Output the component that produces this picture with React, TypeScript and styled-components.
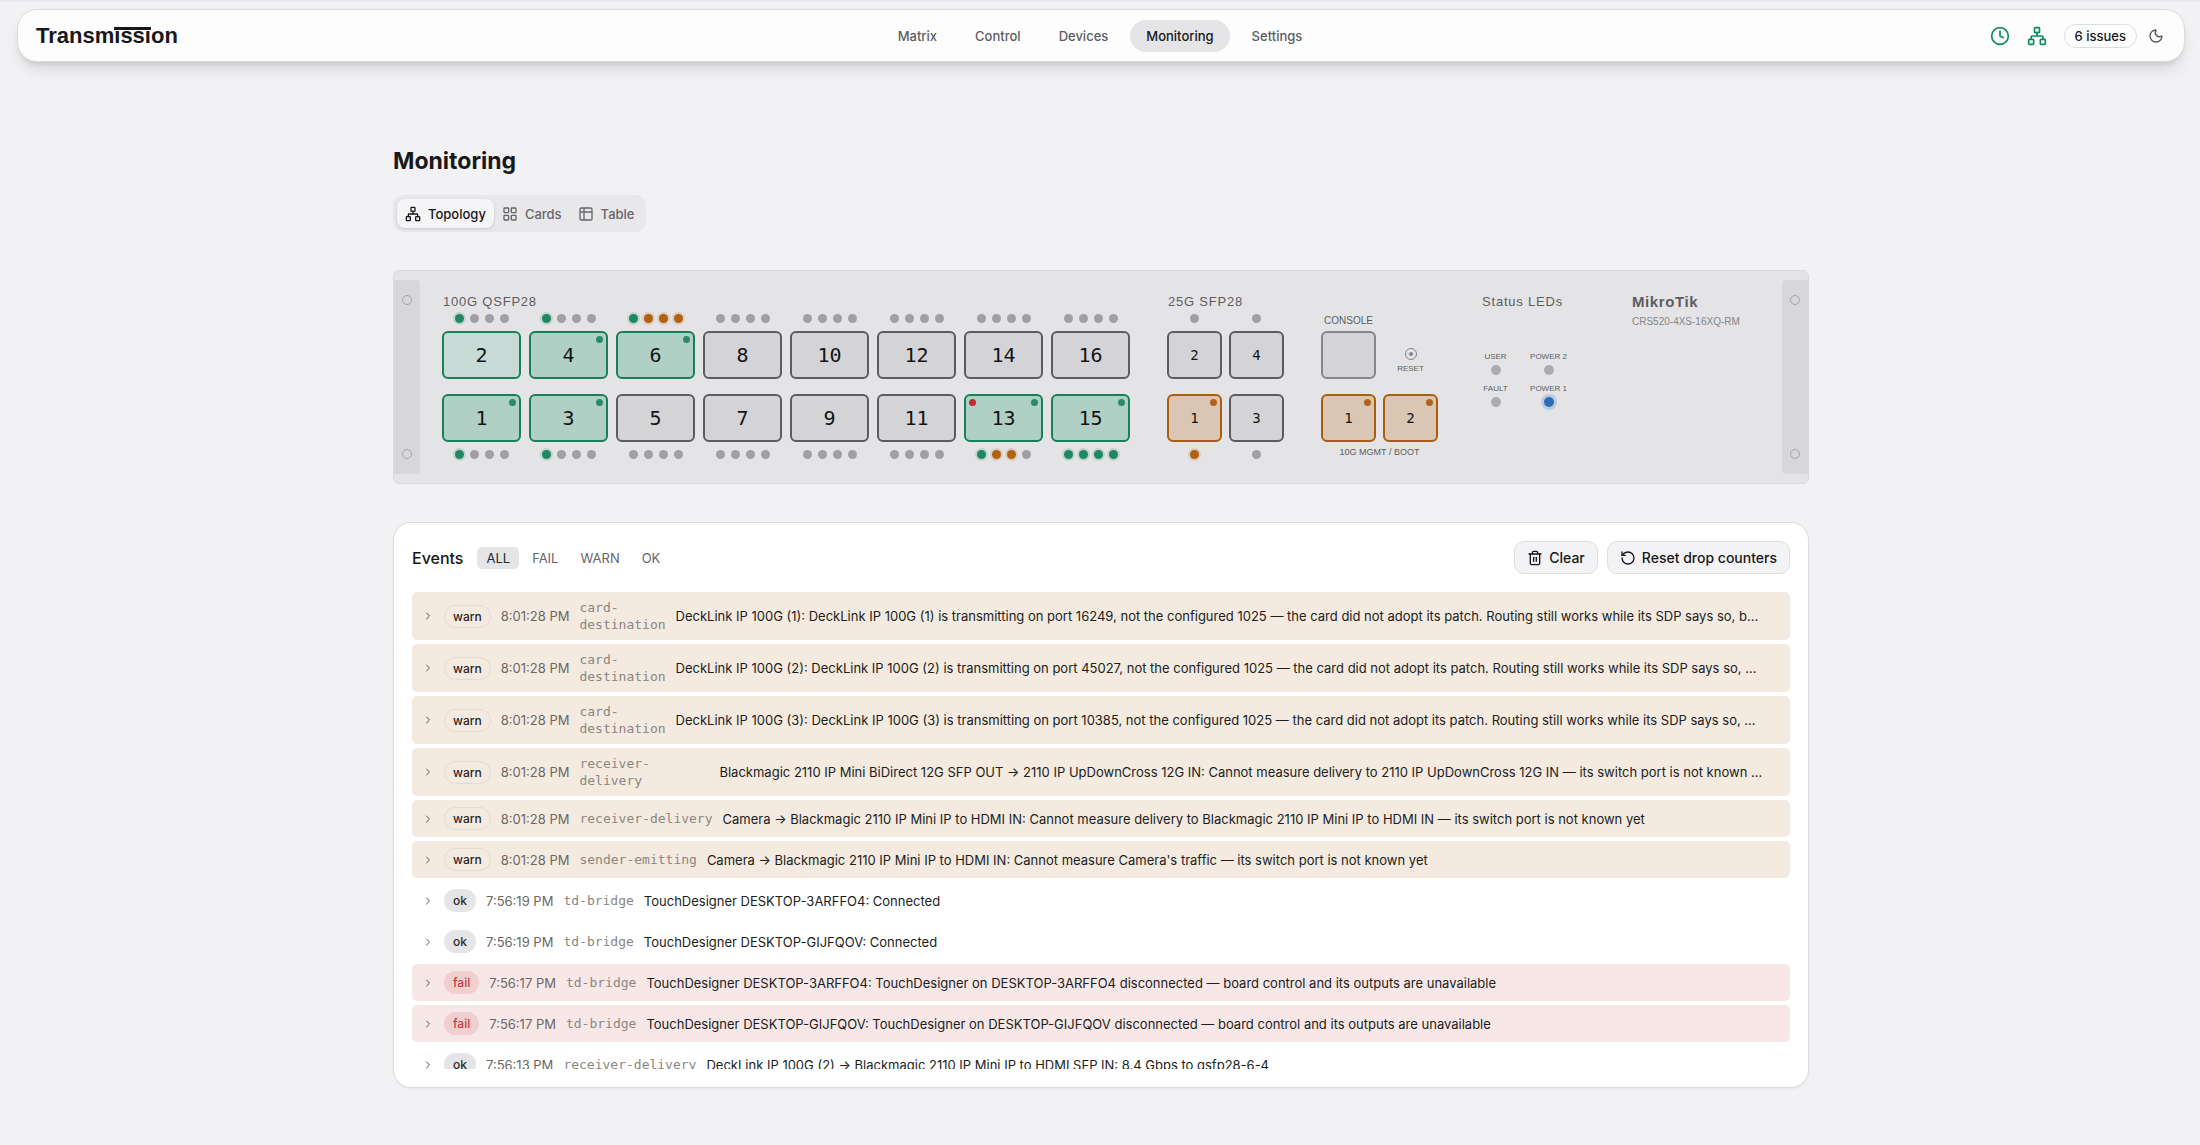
import React, { useState } from "react";
import styled, { createGlobalStyle, css } from "styled-components";
import {
  ChevronRight,
  Clock,
  LayoutGrid,
  Moon,
  Network,
  RotateCcw,
  Table2,
  Trash2,
} from "lucide-react";

const sans = `Inter, "Liberation Sans", sans-serif`;
const label = `"Liberation Sans", Arial, sans-serif`;
const mono = `"DejaVu Sans Mono", "Liberation Mono", monospace`;

const GlobalStyle = createGlobalStyle`
  * { box-sizing: border-box; }
  body {
    margin: 0;
    background: #f2f2f4;
    color: #18181a;
    font-family: ${sans};
    font-size: 13px;
    line-height: 20px;
    -webkit-font-smoothing: antialiased;
  }
  h1, h2, p, ul { margin: 0; padding: 0; }
  button { font: inherit; color: inherit; border: 0; background: none; padding: 0; cursor: pointer; }
  a { color: inherit; text-decoration: none; }
`;

const Page = styled.div`
  display: flex;
  flex-direction: column;
  border-top: 2px solid #e9e9eb;
  padding: 7px 15px 56px 17px;
`;

/* ---------- header ---------- */

const Header = styled.header`
  display: grid;
  grid-template-columns: 1fr auto 1fr;
  align-items: center;
  height: 53px;
  padding: 0 20px 0 18px;
  background: #fdfdfd;
  border: 1px solid #dcdcde;
  border-radius: 20px;
  box-shadow: 0 10px 16px -3px rgba(0, 0, 0, 0.11), 0 4px 6px -3px rgba(0, 0, 0, 0.12);
`;

const Logo = styled.a`
  justify-self: start;
  font-family: ${label};
  font-size: 22px;
  line-height: 28px;
  font-weight: 700;
`;

const Barred = styled.span`
  position: relative;
  &::before {
    content: "";
    position: absolute;
    left: 0;
    right: 0;
    top: 4px;
    height: 3px;
    background: currentColor;
  }
`;

const Nav = styled.nav`
  display: flex;
  gap: 6px;
`;

const NavLink = styled.a<{ $active?: boolean }>`
  padding: 6px 16px;
  border-radius: 16px;
  font-weight: 500;
  color: ${(p) => (p.$active ? "#18181a" : "#5e5e62")};
  background: ${(p) => (p.$active ? "#e5e5e7" : "transparent")};
`;

const HeaderTools = styled.div`
  justify-self: end;
  display: flex;
  align-items: center;
`;

const StatusIcon = styled.span`
  display: flex;
  margin-right: 17px;
  color: #0f8a60;
`;

const IssueBadge = styled.button`
  height: 24px;
  padding: 0 10px;
  border: 1px solid #dedee0;
  border-radius: 12px;
  font-weight: 500;
  line-height: 22px;
`;

const ThemeButton = styled.button`
  display: flex;
  margin-left: 11px;
  color: #55555a;
`;

/* ---------- page ---------- */

const Main = styled.main`
  display: flex;
  flex-direction: column;
  width: 100%;
  max-width: 1416px;
  margin: 83px auto 0;
`;

const Title = styled.h1`
  font-size: 23px;
  line-height: 32px;
  font-weight: 700;
`;

const Tabs = styled.div`
  display: flex;
  align-self: flex-start;
  margin-top: 18px;
  padding: 4px;
  border-radius: 11px;
  background: #e8e8ea;
`;

const Tab = styled.button<{ $active?: boolean }>`
  display: flex;
  align-items: center;
  gap: 7px;
  height: 29px;
  padding: 0 8px;
  border-radius: 8px;
  font-weight: 500;
  color: #66666a;
  ${(p) =>
    p.$active &&
    css`
      color: #18181a;
      background: #f5f5f7;
      box-shadow: 0 1px 3px rgba(0, 0, 0, 0.14);
    `}
`;

/* ---------- switch faceplate ---------- */

const Faceplate = styled.section`
  display: flex;
  margin-top: 38px;
  border: 1px solid #dadadc;
  border-radius: 6px;
  background: #e4e4e6;
  color: #5c5c60;
  font-family: ${label};
`;

const Ear = styled.div<{ $side: "left" | "right" }>`
  display: flex;
  flex-direction: column;
  justify-content: space-between;
  align-items: center;
  flex: none;
  width: 26px;
  margin: 9px 0;
  padding: 15px 0;
  background: #d7d7d9;
  border-radius: ${(p) => (p.$side === "left" ? "0 4px 4px 0" : "4px 0 0 4px")};
`;

const Screw = styled.span`
  width: 10px;
  height: 10px;
  border: 1px solid #a4a4a6;
  border-radius: 50%;
`;

const Plate = styled.div`
  display: flex;
  flex: 1;
  gap: 37px;
  padding: 23px 22px 24px;
`;

const Group = styled.div`
  display: flex;
  flex-direction: column;
`;

const GroupLabel = styled.div`
  height: 16px;
  margin-bottom: 4px;
  padding-left: 1px;
  font-size: 13px;
  line-height: 16px;
  letter-spacing: 0.06em;
`;

const PortGrid = styled.div<{ $gap: number }>`
  display: grid;
  grid-auto-flow: column;
  grid-template-rows: auto auto;
  gap: 15px ${(p) => p.$gap}px;
`;

const PortCell = styled.div`
  display: flex;
  flex-direction: column;
  align-items: center;
  gap: 8px;
`;

const LedRow = styled.div`
  display: flex;
  gap: 6px;
  height: 9px;
`;

type Tone = "off" | "green" | "amber";

const ledColor: Record<Tone, string> = { off: "#a0a0a2", green: "#1f8862", amber: "#b06212" };

const Led = styled.span<{ $tone: Tone }>`
  width: 9px;
  height: 9px;
  border-radius: 50%;
  background: ${(p) => ledColor[p.$tone]};
  box-shadow: ${(p) => (p.$tone === "off" ? "none" : `0 0 0 2px ${ledColor[p.$tone]}2e`)};
`;

type PortState = "down" | "linked" | "up" | "amber" | "blank";

const portLook: Record<PortState, [string, string]> = {
  down: ["#5c5c60", "#d4d4d6"],
  linked: ["#15805a", "#c8dad6"],
  up: ["#15805a", "#b0d0c5"],
  amber: ["#a85e0c", "#d9c7b3"],
  blank: ["#868689", "#d4d4d6"],
};

const PortBox = styled.button<{ $state: PortState; $small?: boolean }>`
  position: relative;
  width: ${(p) => (p.$small ? 55 : 79)}px;
  height: 48px;
  border: 2px solid ${(p) => portLook[p.$state][0]};
  border-radius: 6px;
  background: ${(p) => portLook[p.$state][1]};
  color: #141416;
  font-family: ${mono};
  font-size: ${(p) => (p.$small ? 14 : 20)}px;
  line-height: 44px;
`;

const PortDot = styled.span<{ $color: string; $left?: boolean }>`
  position: absolute;
  top: 3px;
  ${(p) => (p.$left ? "left" : "right")}: 3px;
  width: 7px;
  height: 7px;
  border-radius: 50%;
  background: ${(p) => p.$color};
`;

const MgmtGroup = styled(Group)`
  padding-top: 21px;
`;

const MgmtGrid = styled.div`
  display: grid;
  grid-template-columns: 55px 55px;
  column-gap: 7px;
`;

const ConsoleLabel = styled.div`
  grid-area: 1 / 1;
  margin-bottom: 4px;
  font-size: 10px;
  line-height: 12px;
  text-align: center;
`;

const ConsolePort = styled(PortBox)`
  grid-area: 2 / 1;
`;

const ResetCell = styled.div`
  grid-area: 2 / 2;
  display: flex;
  flex-direction: column;
  align-items: center;
  justify-content: center;
  gap: 4px;
  padding-top: 12px;
`;

const ResetHole = styled.button`
  display: flex;
  align-items: center;
  justify-content: center;
  width: 12px;
  height: 12px;
  border: 1px solid #86868a;
  border-radius: 50%;
  &::before {
    content: "";
    width: 4px;
    height: 4px;
    border-radius: 50%;
    background: #86868a;
  }
`;

const Tiny = styled.span`
  font-size: 8px;
  line-height: 10px;
  white-space: nowrap;
`;

const MgmtRow = styled.div`
  display: flex;
  gap: 7px;
  margin: 15px 0 4px;
`;

const MgmtCaption = styled.div`
  font-size: 9px;
  line-height: 12px;
  text-align: center;
`;

const StatusGroup = styled(Group)`
  align-items: center;
  gap: 38px;
`;

const StatusGrid = styled.div`
  display: grid;
  grid-template-columns: 41px 41px;
  gap: 9px 12px;
`;

const Indicator = styled.div`
  display: flex;
  flex-direction: column;
  align-items: center;
  gap: 3px;
`;

const IndicatorDot = styled.span<{ $on?: boolean }>`
  width: 10px;
  height: 10px;
  border-radius: 50%;
  background: ${(p) => (p.$on ? "#2b6cb3" : "#acacae")};
  box-shadow: ${(p) => (p.$on ? "0 0 0 3px #b9cbe0" : "none")};
`;

const Brand = styled(Group)`
  gap: 6px;
  padding-left: 26px;
`;

const BrandName = styled.div`
  font-size: 15px;
  line-height: 16px;
  font-weight: 700;
  letter-spacing: 0.04em;
`;

const BrandModel = styled.div`
  color: #858589;
  font-size: 10px;
  line-height: 12px;
  white-space: nowrap;
`;

/* ---------- events ---------- */

const Card = styled.section`
  margin-top: 38px;
  padding: 18px;
  border: 1px solid #dcdcdf;
  border-radius: 18px;
  background: #ffffff;
  box-shadow: 0 1px 2px rgba(0, 0, 0, 0.05);
`;

const CardHead = styled.div`
  display: flex;
  align-items: center;
  margin-bottom: 18px;
`;

const CardTitle = styled.h2`
  font-size: 16px;
  line-height: 22px;
  font-weight: 500;
`;

const Filters = styled.div`
  display: flex;
  gap: 4px;
  margin-left: 14px;
`;

const Filter = styled.button<{ $active?: boolean }>`
  padding: 1px 9px;
  border-radius: 5px;
  color: ${(p) => (p.$active ? "#29292c" : "#66666a")};
  background: ${(p) => (p.$active ? "#e5e5e7" : "transparent")};
`;

const Actions = styled.div`
  display: flex;
  gap: 9px;
  margin-left: auto;
`;

const ActionButton = styled.button`
  display: flex;
  align-items: center;
  gap: 6px;
  height: 33px;
  padding: 0 12px;
  border: 1px solid #dedee1;
  border-radius: 10px;
  background: #f3f3f5;
  font-size: 14px;
  font-weight: 500;
`;

const EventList = styled.ul`
  display: flex;
  flex-direction: column;
  gap: 4px;
  max-height: 477px;
  overflow: hidden;
  list-style: none;
`;

type Level = "warn" | "ok" | "fail";

const rowColor: Record<Level, string> = { warn: "#f4eae0", ok: "transparent", fail: "#f8e7e7" };

const EventRow = styled.li<{ $level: Level }>`
  display: flex;
  align-items: center;
  flex: none;
  gap: 10px;
  padding: 7px 10px;
  border-radius: 5px;
  background: ${(p) => rowColor[p.$level]};
`;

const Expand = styled.button`
  display: flex;
  flex: none;
  width: 12px;
  justify-content: center;
  color: #55555a;
`;

const badgeLook = {
  warn: css`
    border-color: #e3dbd6;
    color: #29241f;
  `,
  ok: css`
    background: #e5e5e7;
    color: #29292c;
  `,
  fail: css`
    background: #f2cfcf;
    color: #c53a42;
  `,
};

const LevelBadge = styled.span<{ $level: Level }>`
  flex: none;
  height: 23px;
  padding: 0 8px;
  border: 1px solid transparent;
  border-radius: 12px;
  font-size: 12px;
  line-height: 21px;
  font-weight: 500;
  ${(p) => badgeLook[p.$level]}
`;

const Time = styled.time`
  flex: none;
  color: #6b6866;
`;

const Source = styled.span<{ $width?: string }>`
  flex: none;
  width: ${(p) => p.$width ?? "auto"};
  color: #8b8681;
  font-family: ${mono};
  line-height: 17px;
`;

const Message = styled.span`
  flex: 0 1 auto;
  min-width: 0;
  overflow: hidden;
  white-space: nowrap;
  text-overflow: ellipsis;
  color: #201d1c;
`;

/* ---------- data ---------- */

interface PortData {
  id: number;
  state: PortState;
  leds: Tone[];
  fault?: boolean;
}

const off: Tone[] = ["off", "off", "off", "off"];
const one: Tone[] = ["green", "off", "off", "off"];

const qsfp: PortData[] = [
  { id: 2, state: "linked", leds: one },
  { id: 1, state: "up", leds: one },
  { id: 4, state: "up", leds: one },
  { id: 3, state: "up", leds: one },
  { id: 6, state: "up", leds: ["green", "amber", "amber", "amber"] },
  { id: 5, state: "down", leds: off },
  { id: 8, state: "down", leds: off },
  { id: 7, state: "down", leds: off },
  { id: 10, state: "down", leds: off },
  { id: 9, state: "down", leds: off },
  { id: 12, state: "down", leds: off },
  { id: 11, state: "down", leds: off },
  { id: 14, state: "down", leds: off },
  { id: 13, state: "up", leds: ["green", "amber", "amber", "off"], fault: true },
  { id: 16, state: "down", leds: off },
  { id: 15, state: "up", leds: ["green", "green", "green", "green"] },
];

const sfp: PortData[] = [
  { id: 2, state: "down", leds: ["off"] },
  { id: 1, state: "amber", leds: ["amber"] },
  { id: 4, state: "down", leds: ["off"] },
  { id: 3, state: "down", leds: ["off"] },
];

interface EventData {
  level: Level;
  time: string;
  source: string;
  text: string;
  sourceWidth?: string;
}

const adoptEvent = (card: number, port: number, tail: string): EventData => ({
  level: "warn",
  time: "8:01:28 PM",
  source: "card-destination",
  sourceWidth: "min-content",
  text: `DeckLink IP 100G (${card}): DeckLink IP 100G (${card}) is transmitting on port ${port}, not the configured 1025 — the card did not adopt its patch. Routing still works while its SDP says so, ${tail}…`,
});

const events: EventData[] = [
  adoptEvent(1, 16249, "b"),
  adoptEvent(2, 45027, ""),
  adoptEvent(3, 10385, ""),
  {
    level: "warn",
    time: "8:01:28 PM",
    source: "receiver-delivery",
    sourceWidth: "130px",
    text: "Blackmagic 2110 IP Mini BiDirect 12G SFP OUT → 2110 IP UpDownCross 12G IN: Cannot measure delivery to 2110 IP UpDownCross 12G IN — its switch port is not known …",
  },
  {
    level: "warn",
    time: "8:01:28 PM",
    source: "receiver-delivery",
    text: "Camera → Blackmagic 2110 IP Mini IP to HDMI IN: Cannot measure delivery to Blackmagic 2110 IP Mini IP to HDMI IN — its switch port is not known yet",
  },
  {
    level: "warn",
    time: "8:01:28 PM",
    source: "sender-emitting",
    text: "Camera → Blackmagic 2110 IP Mini IP to HDMI IN: Cannot measure Camera's traffic — its switch port is not known yet",
  },
  { level: "ok", time: "7:56:19 PM", source: "td-bridge", text: "TouchDesigner DESKTOP-3ARFFO4: Connected" },
  { level: "ok", time: "7:56:19 PM", source: "td-bridge", text: "TouchDesigner DESKTOP-GIJFQOV: Connected" },
  {
    level: "fail",
    time: "7:56:17 PM",
    source: "td-bridge",
    text: "TouchDesigner DESKTOP-3ARFFO4: TouchDesigner on DESKTOP-3ARFFO4 disconnected — board control and its outputs are unavailable",
  },
  {
    level: "fail",
    time: "7:56:17 PM",
    source: "td-bridge",
    text: "TouchDesigner DESKTOP-GIJFQOV: TouchDesigner on DESKTOP-GIJFQOV disconnected — board control and its outputs are unavailable",
  },
  {
    level: "ok",
    time: "7:56:13 PM",
    source: "receiver-delivery",
    text: "DeckLink IP 100G (2) → Blackmagic 2110 IP Mini IP to HDMI SFP IN: 8.4 Gbps to qsfp28-6-4",
  },
];

/* ---------- components ---------- */

function Port({ port, small }: { port: PortData; small?: boolean }) {
  const leds = (
    <LedRow>
      {port.leds.map((tone, i) => (
        <Led key={i} $tone={tone} />
      ))}
    </LedRow>
  );
  const top = port.id % 2 === 0;
  return (
    <PortCell>
      {top && leds}
      <PortBox type="button" $state={port.state} $small={small}>
        {port.id}
        {port.fault && <PortDot $color="#c42a30" $left />}
        {port.state === "up" && <PortDot $color="#2a8a68" />}
        {port.state === "amber" && <PortDot $color="#ad6420" />}
      </PortBox>
      {!top && leds}
    </PortCell>
  );
}

function SwitchFaceplate() {
  return (
    <Faceplate>
      <Ear $side="left">
        <Screw />
        <Screw />
      </Ear>
      <Plate>
        <Group>
          <GroupLabel>100G QSFP28</GroupLabel>
          <PortGrid $gap={8}>
            {qsfp.map((p) => (
              <Port key={p.id} port={p} />
            ))}
          </PortGrid>
        </Group>
        <Group>
          <GroupLabel>25G SFP28</GroupLabel>
          <PortGrid $gap={7}>
            {sfp.map((p) => (
              <Port key={p.id} port={p} small />
            ))}
          </PortGrid>
        </Group>
        <MgmtGroup>
          <MgmtGrid>
            <ConsoleLabel>CONSOLE</ConsoleLabel>
            <ConsolePort type="button" aria-label="Console" $state="blank" $small />
            <ResetCell>
              <ResetHole type="button" aria-label="Reset" />
              <Tiny>RESET</Tiny>
            </ResetCell>
          </MgmtGrid>
          <MgmtRow>
            {[1, 2].map((n) => (
              <PortBox key={n} type="button" $state="amber" $small>
                {n}
                <PortDot $color="#ad6420" />
              </PortBox>
            ))}
          </MgmtRow>
          <MgmtCaption>10G MGMT / BOOT</MgmtCaption>
        </MgmtGroup>
        <StatusGroup>
          <GroupLabel>Status LEDs</GroupLabel>
          <StatusGrid>
            {["USER", "POWER 2", "FAULT", "POWER 1"].map((name) => (
              <Indicator key={name}>
                <Tiny>{name}</Tiny>
                <IndicatorDot $on={name === "POWER 1"} />
              </Indicator>
            ))}
          </StatusGrid>
        </StatusGroup>
        <Brand>
          <BrandName>MikroTik</BrandName>
          <BrandModel>CRS520-4XS-16XQ-RM</BrandModel>
        </Brand>
      </Plate>
      <Ear $side="right">
        <Screw />
        <Screw />
      </Ear>
    </Faceplate>
  );
}

function EventsCard() {
  const [filter, setFilter] = useState("ALL");
  const shown = events.filter((e) => filter === "ALL" || e.level.toUpperCase() === filter);
  return (
    <Card>
      <CardHead>
        <CardTitle>Events</CardTitle>
        <Filters>
          {["ALL", "FAIL", "WARN", "OK"].map((name) => (
            <Filter key={name} type="button" $active={name === filter} onClick={() => setFilter(name)}>
              {name}
            </Filter>
          ))}
        </Filters>
        <Actions>
          <ActionButton type="button">
            <Trash2 size={16} />
            Clear
          </ActionButton>
          <ActionButton type="button">
            <RotateCcw size={16} />
            Reset drop counters
          </ActionButton>
        </Actions>
      </CardHead>
      <EventList>
        {shown.map((e, i) => (
          <EventRow key={i} $level={e.level}>
            <Expand type="button" aria-label="Expand">
              <ChevronRight size={16} />
            </Expand>
            <LevelBadge $level={e.level}>{e.level}</LevelBadge>
            <Time>{e.time}</Time>
            <Source $width={e.sourceWidth}>{e.source}</Source>
            <Message>{e.text}</Message>
          </EventRow>
        ))}
      </EventList>
    </Card>
  );
}

export default function App() {
  const [view, setView] = useState("Topology");
  const views = [
    { name: "Topology", Icon: Network },
    { name: "Cards", Icon: LayoutGrid },
    { name: "Table", Icon: Table2 },
  ];
  return (
    <>
      <GlobalStyle />
      <Page>
        <Header>
          <Logo href="#">
            Transm<Barred>issi</Barred>on
          </Logo>
          <Nav>
            {["Matrix", "Control", "Devices", "Monitoring", "Settings"].map((name) => (
              <NavLink key={name} href="#" $active={name === "Monitoring"}>
                {name}
              </NavLink>
            ))}
          </Nav>
          <HeaderTools>
            <StatusIcon>
              <Clock size={20} />
            </StatusIcon>
            <StatusIcon>
              <Network size={20} />
            </StatusIcon>
            <IssueBadge type="button">6 issues</IssueBadge>
            <ThemeButton type="button" aria-label="Theme">
              <Moon size={16} />
            </ThemeButton>
          </HeaderTools>
        </Header>
        <Main>
          <Title>Monitoring</Title>
          <Tabs>
            {views.map(({ name, Icon }) => (
              <Tab key={name} type="button" $active={name === view} onClick={() => setView(name)}>
                <Icon size={16} />
                {name}
              </Tab>
            ))}
          </Tabs>
          <SwitchFaceplate />
          <EventsCard />
        </Main>
      </Page>
    </>
  );
}
